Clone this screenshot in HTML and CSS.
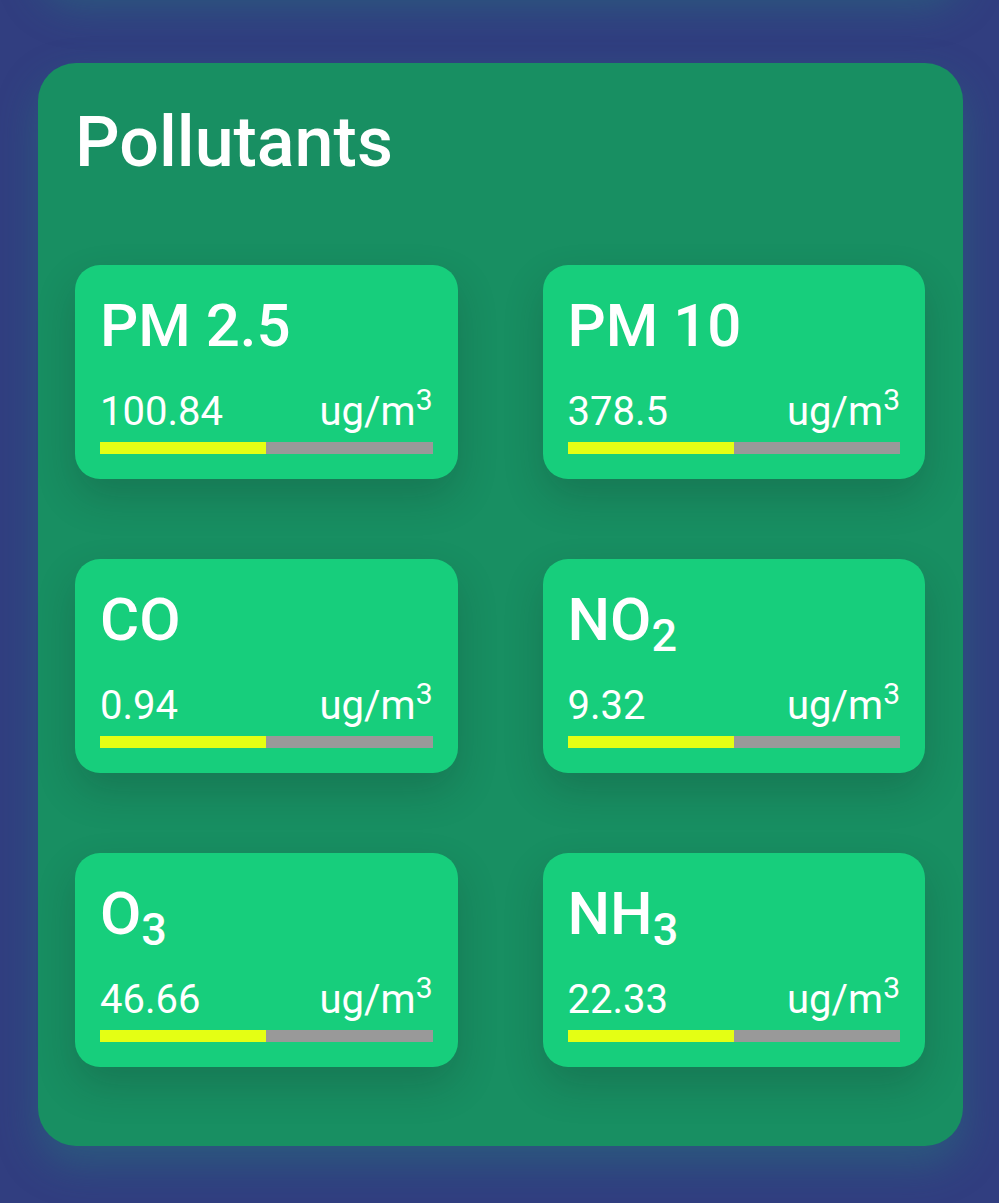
FILE: index.html
```html
<!DOCTYPE html>
<html lang="en">
<head>
<meta charset="utf-8">
<title>Pollutants</title>
<meta name="viewport" content="width=device-width, initial-scale=1">
<link rel="stylesheet" href="styles.css">
</head>
<body>
<div class="previous-panel"></div>
<main class="panel">
  <h1 class="panel-title">Pollutants</h1>
  <div class="grid">
    <section class="card">
      <h2 class="name">PM 2.5</h2>
      <div class="reading"><span>100.84</span><span>ug/m<sup>3</sup></span></div>
      <div class="bar"><div class="fill"></div></div>
    </section>
    <section class="card">
      <h2 class="name">PM 10</h2>
      <div class="reading"><span>378.5</span><span>ug/m<sup>3</sup></span></div>
      <div class="bar"><div class="fill"></div></div>
    </section>
    <section class="card">
      <h2 class="name">CO</h2>
      <div class="reading"><span>0.94</span><span>ug/m<sup>3</sup></span></div>
      <div class="bar"><div class="fill"></div></div>
    </section>
    <section class="card">
      <h2 class="name">NO<sub>2</sub></h2>
      <div class="reading"><span>9.32</span><span>ug/m<sup>3</sup></span></div>
      <div class="bar"><div class="fill"></div></div>
    </section>
    <section class="card">
      <h2 class="name">O<sub>3</sub></h2>
      <div class="reading"><span>46.66</span><span>ug/m<sup>3</sup></span></div>
      <div class="bar"><div class="fill"></div></div>
    </section>
    <section class="card">
      <h2 class="name">NH<sub>3</sub></h2>
      <div class="reading"><span>22.33</span><span>ug/m<sup>3</sup></span></div>
      <div class="bar"><div class="fill"></div></div>
    </section>
  </div>
</main>
</body>
</html>
```
FILE: styles.css
```css
* {
  box-sizing: border-box;
}

body {
  margin: 0;
  background: #313e80;
  color: #fff;
  font-family: Roboto, sans-serif;
  overflow-x: hidden;
}

.previous-panel {
  height: 100px;
  margin: -112px 36px 75px 38px;
  border-radius: 38px;
  box-shadow: 0 18px 40px rgba(32, 143, 120, 0.35);
}

.panel {
  margin: 0 36px 57px 38px;
  padding: 38px 38px 79px 37px;
  border-radius: 38px;
  background: #188f62;
  box-shadow: 0 18px 40px rgba(32, 143, 120, 0.35);
}

.panel-title {
  margin: 0 0 82px;
  font-size: 70px;
  line-height: 82px;
  font-weight: 500;
}

.grid {
  display: grid;
  grid-template-columns: 1fr 1fr;
  column-gap: 85px;
  row-gap: 80px;
}

.card {
  padding: 25px;
  border-radius: 25px;
  background: #17ce7c;
  box-shadow: 0 18px 40px rgba(20, 30, 28, 0.2);
}

.name {
  margin: 0 0 26px;
  font-size: 60px;
  line-height: 72px;
  font-weight: 500;
}

.name sub,
.reading sup {
  font-size: 75%;
  line-height: 0;
  position: relative;
  vertical-align: baseline;
}

.name sub {
  bottom: -0.25em;
}

.reading sup {
  top: -0.5em;
}

.reading {
  display: flex;
  justify-content: space-between;
  font-size: 40px;
  line-height: 48px;
  margin-bottom: 6px;
}

.bar {
  height: 12px;
  background: #999;
}

.fill {
  width: 50%;
  height: 100%;
  background: #e4ff14;
}
```
